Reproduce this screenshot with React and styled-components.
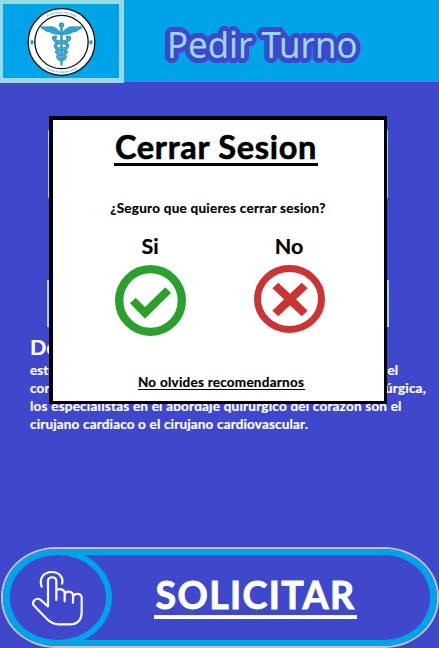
import React from 'react';
import styled, { createGlobalStyle } from 'styled-components';

const GlobalStyle = createGlobalStyle`
  * { box-sizing: border-box; }
  body { margin: 0; background: #3f48cc; overflow: hidden; }
`;

// A ring of hard shadows gives the heading its round-cornered outline.
const outline = Array.from({ length: 24 }, (_, i) => {
  const angle = (i / 24) * Math.PI * 2;
  return `${(Math.cos(angle) * 5.2).toFixed(2)}px ${(Math.sin(angle) * 4.9).toFixed(2)}px 0 #3f48cc`;
}).join(', ');

const Screen = styled.div`
  position: relative;
  width: 439px;
  height: 648px;
  display: flex;
  flex-direction: column;
  background: #3f48cc;
  font-family: Lato, Carlito, sans-serif;
  font-weight: 700;
  overflow: hidden;
`;

const Header = styled.header`
  height: 82px;
  flex: none;
  display: flex;
  align-items: flex-start;
  background: #00a2e8;
`;

const LogoBox = styled.div`
  width: 124px;
  height: 83px;
  flex: none;
  border: solid #99d9ea;
  border-width: 4px 5px 5px 3px;
  background: #00a2e8;
  svg { display: block; margin: 3px 0 0 24px; }
`;

const PageTitle = styled.h1`
  margin: 18px 0 0 43px;
  font: 400 37px/52px "Noto Sans", sans-serif;
  color: #99d9ea;
  white-space: nowrap;
  text-shadow: ${outline};
  transform: scaleX(0.94);
  transform-origin: left;
`;

const Content = styled.main`
  flex: 1;
  display: flex;
  flex-direction: column;
  padding-top: 48px;
`;

const Card = styled.div`
  width: ${p => p.$width}px;
  height: ${p => p.$height}px;
  margin: 0 0 ${p => p.$gap}px ${p => p.$left}px;
  flex: none;
  background: #99d9ea;
`;

const Description = styled.section`
  margin-left: 30px;
  color: #fff;
  -webkit-text-stroke: 0.2px currentColor;
`;

const DescriptionTitle = styled.h2`
  margin: 0;
  font-size: 21.5px;
  line-height: 26px;
  height: 27px;
`;

const Line = styled.p`
  margin: 0;
  width: ${p => p.$width}px;
  font-size: 13.5px;
  line-height: 18px;
  letter-spacing: ${p => p.$spacing || 0}px;
  white-space: nowrap;
  text-align-last: justify;
`;

const SplitLine = styled(Line)`
  display: flex;
  justify-content: space-between;
`;

const Dialog = styled.div`
  position: absolute;
  left: 49px;
  top: 116px;
  width: 338px;
  height: 288px;
  display: flex;
  flex-direction: column;
  align-items: center;
  border: solid #000;
  border-width: 4px 3px 3px 4px;
  background: #fff;
  color: #000;
  -webkit-text-stroke: 0.2px currentColor;
`;

const Underlined = styled.span`
  display: block;
  width: ${p => p.$width}px;
  height: ${p => p.$height}px;
  font-size: ${p => p.$size}px;
  line-height: ${p => p.$line}px;
  letter-spacing: ${p => p.$spacing || 0}px;
  border-bottom: ${p => p.$rule}px solid currentColor;
  white-space: nowrap;
  text-align: center;
  -webkit-text-stroke: ${p => p.$weight || 0.2}px currentColor;
`;

const DialogTitle = styled.h2`
  margin: 10px 0 0 -5px;
  font-size: inherit;
`;

const Question = styled.p`
  margin: 33px 0 0 -1px;
  font-size: 13.5px;
  line-height: 18px;
  letter-spacing: ${p => p.$spacing}px;
  white-space: nowrap;
`;

const Choices = styled.div`
  display: flex;
  justify-content: space-between;
  width: 210px;
  margin: 15px 0 0 2px;
`;

const Choice = styled.button`
  display: flex;
  flex-direction: column;
  align-items: center;
  width: 71px;
  padding: 0;
  border: 0;
  background: none;
  color: #000;
  font: 700 21.5px/28px Lato, sans-serif;
  svg { display: block; margin-top: ${p => p.$gap}px; }
`;

const Recommend = styled.div`
  margin: 38px 0 0 5px;
`;

const SubmitButton = styled.button`
  position: relative;
  flex: none;
  width: 438px;
  height: 101px;
  margin-left: 1px;
  padding: 0;
  display: flex;
  border: 2px solid #c3c3c3;
  border-radius: 55px / 50px;
  background: #3f48cc;
  color: #fff;
  font: inherit;
`;

const SubmitInner = styled.span`
  display: flex;
  width: 100%;
  height: 97px;
  border: solid #00a2e8;
  border-width: 6px 7px;
  border-radius: 53px / 48px;
`;

const TapRing = styled.span`
  flex: none;
  width: 109px;
  height: 97px;
  margin: -6px 0 0 -7px;
  padding: 21px 0 0 27px;
  border: 6px solid #00a2e8;
  border-radius: 50%;
  text-align: left;
  svg { display: block; margin: -7px 0 0 -6px; }
`;

const SubmitLabel = styled.span`
  margin: 18px 0 0 42px;
`;

function Logo() {
  return (
    <svg width="69" height="70" viewBox="81 22 207 210">
      <defs>
        <path id="top-arc" d="M98 127a86 86 0 0 1 172 0" />
        <path id="bottom-arc" d="M91 127a93 93 0 0 0 186 0" />
      </defs>
      <circle cx="184.500" cy="127" r="100" fill="#fff" stroke="#111" strokeWidth="4" />
      <circle cx="184.500" cy="127" r="80" fill="#fff" stroke="#111" strokeWidth="4" />
      <g fill="#36afe0" fontFamily="Lato, sans-serif" fontSize="9.500" textAnchor="middle">
        <text><textPath href="#top-arc" startOffset="50%">A chemical user shop</textPath></text>
        <text><textPath href="#bottom-arc" startOffset="50%">mundo is murmur done</textPath></text>
      </g>
      <path d="M96 119l6 9-6 9-6-9zM273 119l6 9-6 9-6-9z" fill="#2ba4d4" />
      <g fill="#2ba4d8" stroke="#286b86" strokeWidth="1">
        <path d="M182 105C166 104 155 103 149 97C139 98 135 94 135 91C127 90 123 86 121 80C142 83 153 77 166 84Q178 90 182 100Z" />
        <path d="M187 105C203 104 214 103 220 97C230 98 234 94 234 91C242 90 246 86 248 80C227 83 216 77 203 84Q191 90 187 100Z" />
        <path d="M181 83h7l-1 112-2.500 4-2.500-4z" />
        <circle cx="184.500" cy="76" r="7.500" />
      </g>
      <g fill="none" strokeLinecap="round">
        <path d="M167 112C151 111 165 128 184 128C213 132 205 147 184 149C161 152 169 163 184 164C202 168 197 178 184 181M202 112C218 111 204 128 184 128C156 132 164 147 184 149C208 152 200 163 184 164C167 168 173 178 184 181" stroke="#286b86" strokeWidth="9" />
        <path d="M167 112C151 111 165 128 184 128C213 132 205 147 184 149C161 152 169 163 184 164C202 168 197 178 184 181M202 112C218 111 204 128 184 128C156 132 164 147 184 149C208 152 200 163 184 164C167 168 173 178 184 181" stroke="#36afe0" strokeWidth="6" />
      </g>
    </svg>
  );
}

function CheckIcon() {
  return (
    <svg width="71" height="71" viewBox="0 0 213 213">
      <circle cx="106.500" cy="106.500" r="94" fill="none" stroke="#2ca02c" strokeWidth="25" />
      <path d="M45 115l17-17 28 28 61-59 17 17-78 77z" fill="#2ca02c" />
    </svg>
  );
}

function CrossIcon() {
  return (
    <svg width="71" height="68" viewBox="0 0 213 204">
      <ellipse cx="106.500" cy="102" rx="96" ry="91.500" fill="none" stroke="#cc3333" strokeWidth="21" />
      <path d="M73 53l35 33 35-33 18 17-35 33 35 34-18 17-35-33-35 33-18-17 35-34-35-33z" fill="#cc3333" />
    </svg>
  );
}

function TapIcon() {
  return (
    <svg width="55" height="58" viewBox="90 85 165 174">
      <g fill="none" stroke="#fff" strokeWidth="6.500" strokeLinecap="round" strokeLinejoin="round">
        <path d="M125 138C116 112 132 94 155 94C178 94 192 112 186 129" />
        <path d="M169 178V121C169 106 144 106 144 121V197L121 177C109 169 94 182 101 194L140 234C153 247 162 251 177 251H208C231 251 245 240 245 213V171C245 156 219 156 219 171V186M219 171V165C219 149 194 149 194 163V182M194 163V158C194 145 176 142 169 149" />
      </g>
    </svg>
  );
}

export default function App() {
  return (
    <Screen>
      <GlobalStyle />
      <Header>
        <LogoBox><Logo /></LogoBox>
        <PageTitle>Pedir Turno</PageTitle>
      </Header>
      <Content>
        <Card $width={340} $height={68} $gap={82} $left={48} />
        <Card $width={342} $height={47} $gap={7} $left={47} />
        <Description>
          <DescriptionTitle>Desc</DescriptionTitle>
          <SplitLine $width={368}><span>estu</span><span>el</span></SplitLine>
          <SplitLine $width={396} $spacing={0.2}><span>cora</span><span>quirúrgica,</span></SplitLine>
          <Line $width={371} $spacing={0.22}>los especialistas en el abordaje quirurgico del corazon son el</Line>
          <Line $width={278} $spacing={0.16}>cirujano cardiaco o el cirujano cardiovascular.</Line>
        </Description>
      </Content>
      <SubmitButton>
        <SubmitInner>
          <TapRing><TapIcon /></TapRing>
          <SubmitLabel>
            <Underlined $width={203} $height={46} $size={37.5} $line={43} $rule={4} $spacing={1.4} $weight={0.9}>SOLICITAR</Underlined>
          </SubmitLabel>
        </SubmitInner>
      </SubmitButton>
      <Dialog role="dialog">
        <DialogTitle>
          <Underlined $width={204} $height={36} $size={32.5} $line={34} $rule={3} $spacing={0.7} $weight={0.6}>Cerrar Sesion</Underlined>
        </DialogTitle>
        <Question $spacing={0.26}>¿Seguro que quieres cerrar sesion?</Question>
        <Choices>
          <Choice $gap={5}>Si<CheckIcon /></Choice>
          <Choice $gap={5}>No<CrossIcon /></Choice>
        </Choices>
        <Recommend>
          <Underlined $width={167} $height={16} $size={13.5} $line={16} $rule={1} $spacing={0.25}>No olvides recomendarnos</Underlined>
        </Recommend>
      </Dialog>
    </Screen>
  );
}
